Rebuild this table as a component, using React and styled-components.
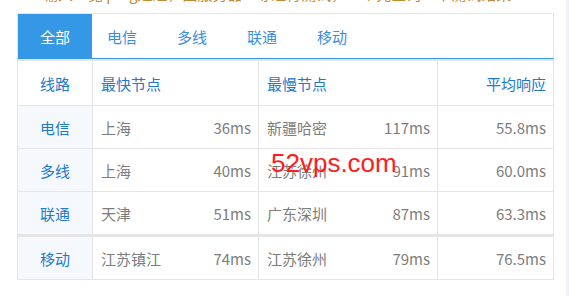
import React from 'react';
import styled, { createGlobalStyle } from 'styled-components';

const tabs = ['全部', '电信', '多线', '联通', '移动'];

const rows = [
  { line: '电信', fast: '上海', fastMs: '36ms', slow: '新疆哈密', slowMs: '117ms', avg: '55.8ms' },
  { line: '多线', fast: '上海', fastMs: '40ms', slow: '江苏徐州', slowMs: '91ms', avg: '60.0ms' },
  { line: '联通', fast: '天津', fastMs: '51ms', slow: '广东深圳', slowMs: '87ms', avg: '63.3ms' },
  { line: '移动', fast: '江苏镇江', fastMs: '74ms', slow: '江苏徐州', slowMs: '79ms', avg: '76.5ms', split: true },
];

const App = () => {
  return (
    <Page>
      <GlobalStyle />
      <Main>
        <Notice>
          <span>输入一览 ping延迟，回服务器IP等进行测试，一个先查询一下测试结果</span>
        </Notice>
        <TabBar>
          {tabs.map((t, i) => (
            <Tab key={t} active={i === 0}>{t}</Tab>
          ))}
        </TabBar>
        <Table>
          <Row head>
            <LineCell head>线路</LineCell>
            <Cell head>最快节点</Cell>
            <Cell head>最慢节点</Cell>
            <Cell head align="right">平均响应</Cell>
          </Row>
          {rows.map(r => (
            <Row key={r.line} split={r.split}>
              <LineCell>{r.line}</LineCell>
              <Cell>
                <span>{r.fast}</span>
                <span>{r.fastMs}</span>
              </Cell>
              <Cell>
                <span>{r.slow}</span>
                <span>{r.slowMs}</span>
              </Cell>
              <Cell align="right">{r.avg}</Cell>
            </Row>
          ))}
          <Watermark>52vps.com</Watermark>
        </Table>
      </Main>
      <Rail />
    </Page>
  );
};

export default App;

const GlobalStyle = createGlobalStyle`
  body {
    margin: 0;
    background: #fff;
    font-family: "Noto Sans CJK SC", "Noto Sans", sans-serif;
  }
`;

const Page = styled.div`
  display: flex;
  height: 296px;
  overflow: hidden;
`;

const Main = styled.div`
  width: 537px;
  padding-left: 17px;
  flex: none;
`;

const Rail = styled.div`
  margin-left: auto;
  width: 3px;
  background: #eef2f8;
`;

const Notice = styled.div`
  height: 13px;
  overflow: hidden;
  padding-left: 26px;
  white-space: nowrap;
  font-size: 15px;
  line-height: 20px;
  color: #c08a33;

  span {
    display: block;
    margin-top: -16px;
  }
`;

const TabBar = styled.div`
  display: flex;
  height: 44px;
  border: 1px solid #e5e5e5;
  border-bottom: 1px solid #3498e6;
`;

const Tab = styled.div`
  display: flex;
  align-items: center;
  justify-content: center;
  box-sizing: border-box;
  width: ${p => (p.active ? '74px' : '70px')};
  padding-right: ${p => (p.active ? '0' : '10px')};
  font-size: 15px;
  color: ${p => (p.active ? '#fff' : '#3a8ce0')};
  background: ${p => (p.active ? '#3498e6' : 'transparent')};
`;

const Table = styled.div`
  position: relative;
  border-top: 2px solid #e5e5e5;
  border-left: 1px solid #e5e5e5;
`;

const Row = styled.div`
  display: grid;
  grid-template-columns: 75px 166px 179px 116px;
  height: ${p => (p.head ? '44px' : '42px')};
  border-top: ${p => (p.split ? '2px solid #e5e5e5' : 'none')};
  border-bottom: 1px solid #e5e5e5;
  font-size: 15px;
`;

const Cell = styled.div`
  display: flex;
  align-items: center;
  justify-content: ${p => (p.align === 'right' ? 'flex-end' : 'space-between')};
  box-sizing: border-box;
  padding: 0 7px 0 8px;
  border-right: 1px solid #e5e5e5;
  color: ${p => (p.head ? '#2079cc' : '#7d7d7d')};
`;

const LineCell = styled(Cell)`
  justify-content: center;
  padding: 0;
  color: #2079cc;
  background: ${p => (p.head ? '#fff' : '#f5f9fd')};
`;

const Watermark = styled.div`
  position: absolute;
  left: 253px;
  top: 87px;
  font-family: "Liberation Sans", Arial, sans-serif;
  font-size: 26px;
  color: #ff1c1c;
  pointer-events: none;
`;
